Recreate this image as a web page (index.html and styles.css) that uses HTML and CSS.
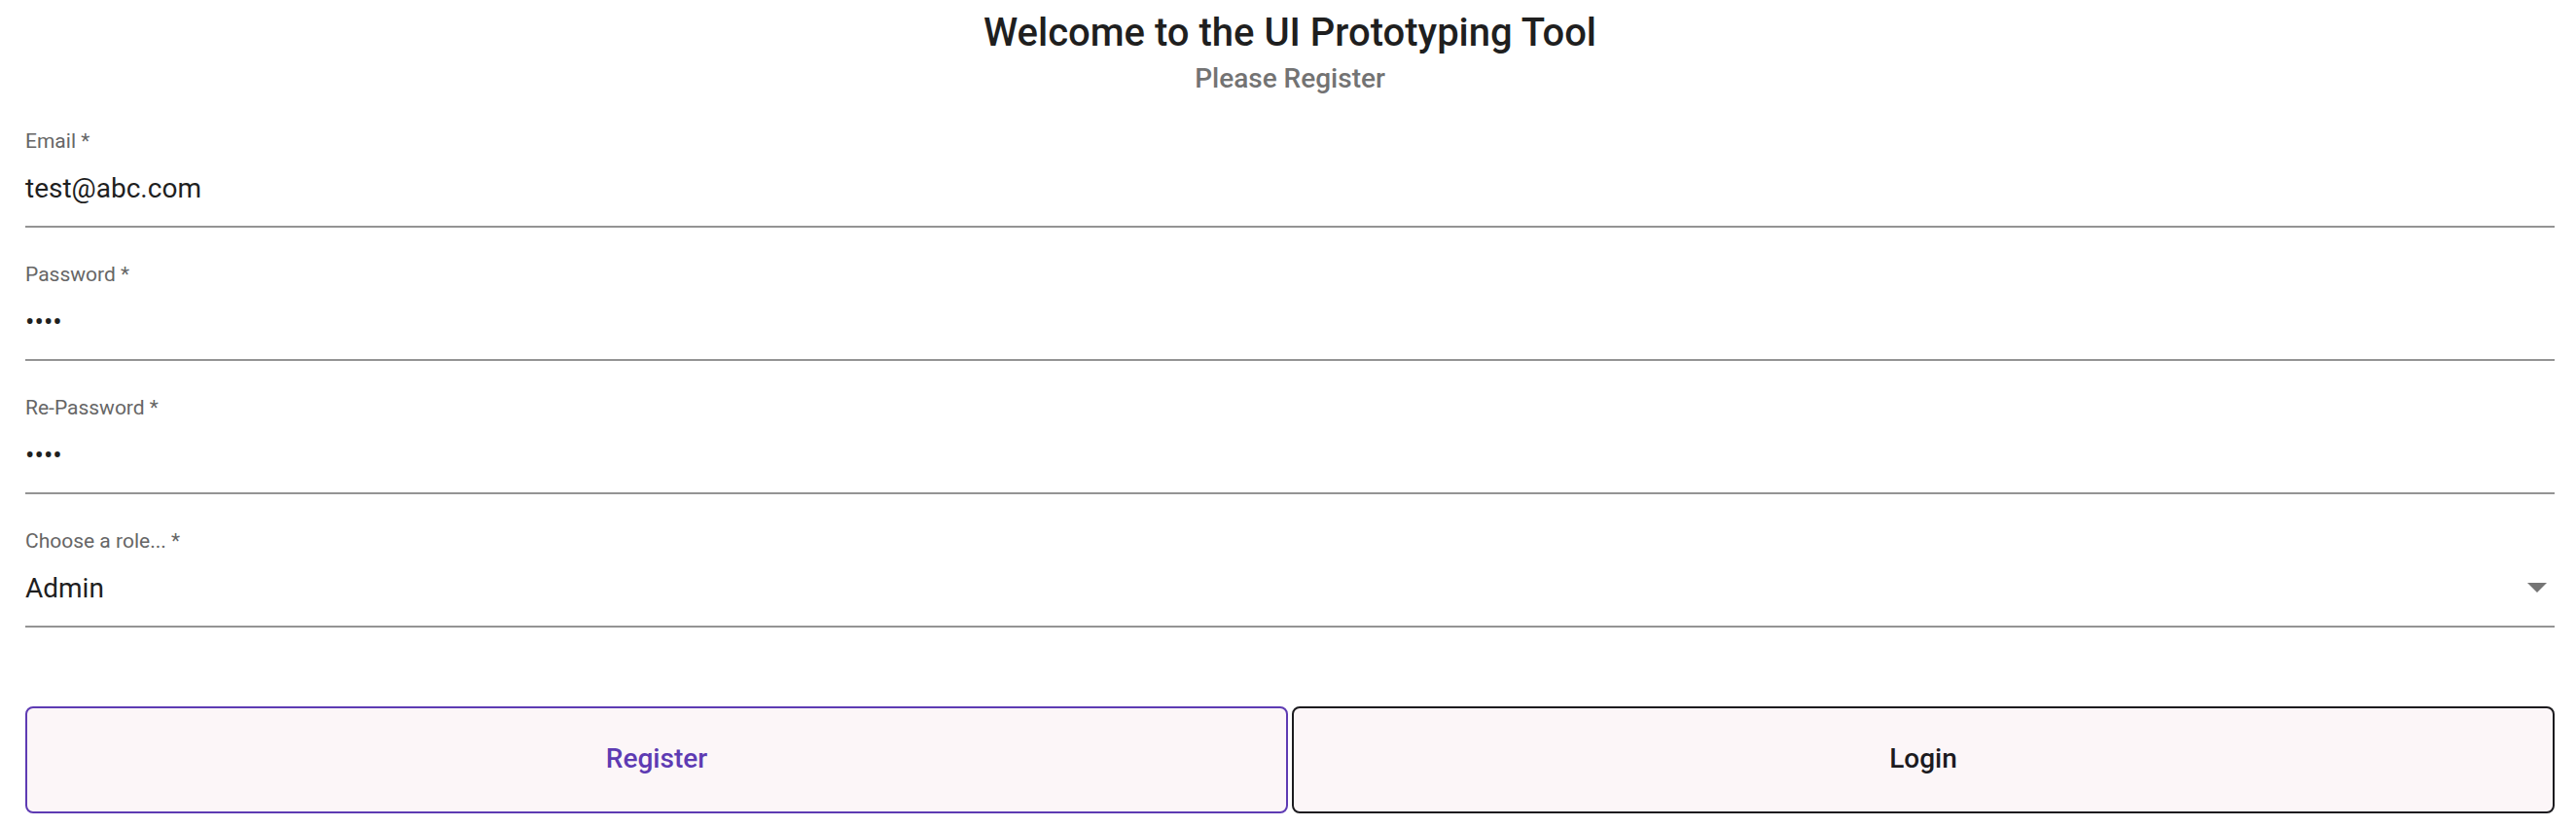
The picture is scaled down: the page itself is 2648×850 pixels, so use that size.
FILE: index.html
```html
<!DOCTYPE html>
<html lang="en">
<head>
<meta charset="utf-8">
<title>Register</title>
<link rel="stylesheet" href="styles.css">
</head>
<body>
<main class="page">
  <header class="header">
    <h1 class="title">Welcome to the UI Prototyping Tool</h1>
    <h2 class="subtitle">Please Register</h2>
  </header>
  <form class="form">
    <div class="field">
      <label class="label">Email *</label>
      <div class="control"><span class="value">test@abc.com</span></div>
    </div>
    <div class="field">
      <label class="label">Password *</label>
      <div class="control"><span class="value">••••</span></div>
    </div>
    <div class="field">
      <label class="label">Re-Password *</label>
      <div class="control"><span class="value">••••</span></div>
    </div>
    <div class="field">
      <label class="label">Choose a role... *</label>
      <div class="control select">
        <span class="value">Admin</span>
        <svg class="arrow" width="20" height="10" viewBox="0 0 20 10"><path d="M0 0 L20 0 L10 10 Z" fill="#757575"/></svg>
      </div>
    </div>
  </form>
  <div class="actions">
    <button class="btn btn-primary" type="button">Register</button>
    <button class="btn btn-secondary" type="button">Login</button>
  </div>
</main>
</body>
</html>
```

FILE: styles.css
```css
* { box-sizing: border-box; }

html, body {
  margin: 0;
  padding: 0;
  background: #ffffff;
}

body {
  font-family: Roboto, "Noto Sans", "Liberation Sans", sans-serif;
  color: rgba(0, 0, 0, 0.87);
}

.page {
  padding: 10px 22px 0 26px;
}

.header {
  text-align: center;
}

.title {
  margin: 0;
  font-size: 40px;
  line-height: 48px;
  font-weight: 500;
  color: #1f1f1f;
}

.subtitle {
  margin: 7px 0 0;
  font-size: 28px;
  line-height: 32px;
  font-weight: 500;
  color: #737373;
}

.form {
  display: flex;
  flex-direction: column;
  gap: 36px;
  margin-top: 36px;
}

.field {
  display: flex;
  flex-direction: column;
  border-bottom: 2px solid #949494;
}

.label {
  display: block;
  font-size: 21px;
  line-height: 24px;
  color: #666666;
}

.control {
  display: flex;
  align-items: center;
  height: 40px;
  margin-top: 17px;
  margin-bottom: 18px;
  font-size: 28px;
  line-height: 40px;
  color: #1f1f1f;
}

.value {
  flex: 1;
}

.select .arrow {
  margin-right: 8px;
  margin-top: -2px;
  flex: none;
}

.actions {
  display: grid;
  grid-template-columns: 1fr 1fr;
  gap: 4px;
  margin-top: 81px;
}

.btn {
  height: 110px;
  padding: 0 0 3px;
  border-radius: 8px;
  background: #fcf6f8;
  font-family: Roboto, "Noto Sans", "Liberation Sans", sans-serif;
  font-size: 28px;
  font-weight: 500;
  cursor: pointer;
}

.btn-primary {
  border: 2px solid #5e3bb3;
  color: #5e3bb3;
}

.btn-secondary {
  border: 2px solid #1c1b1f;
  color: #1c1b1f;
}
```
